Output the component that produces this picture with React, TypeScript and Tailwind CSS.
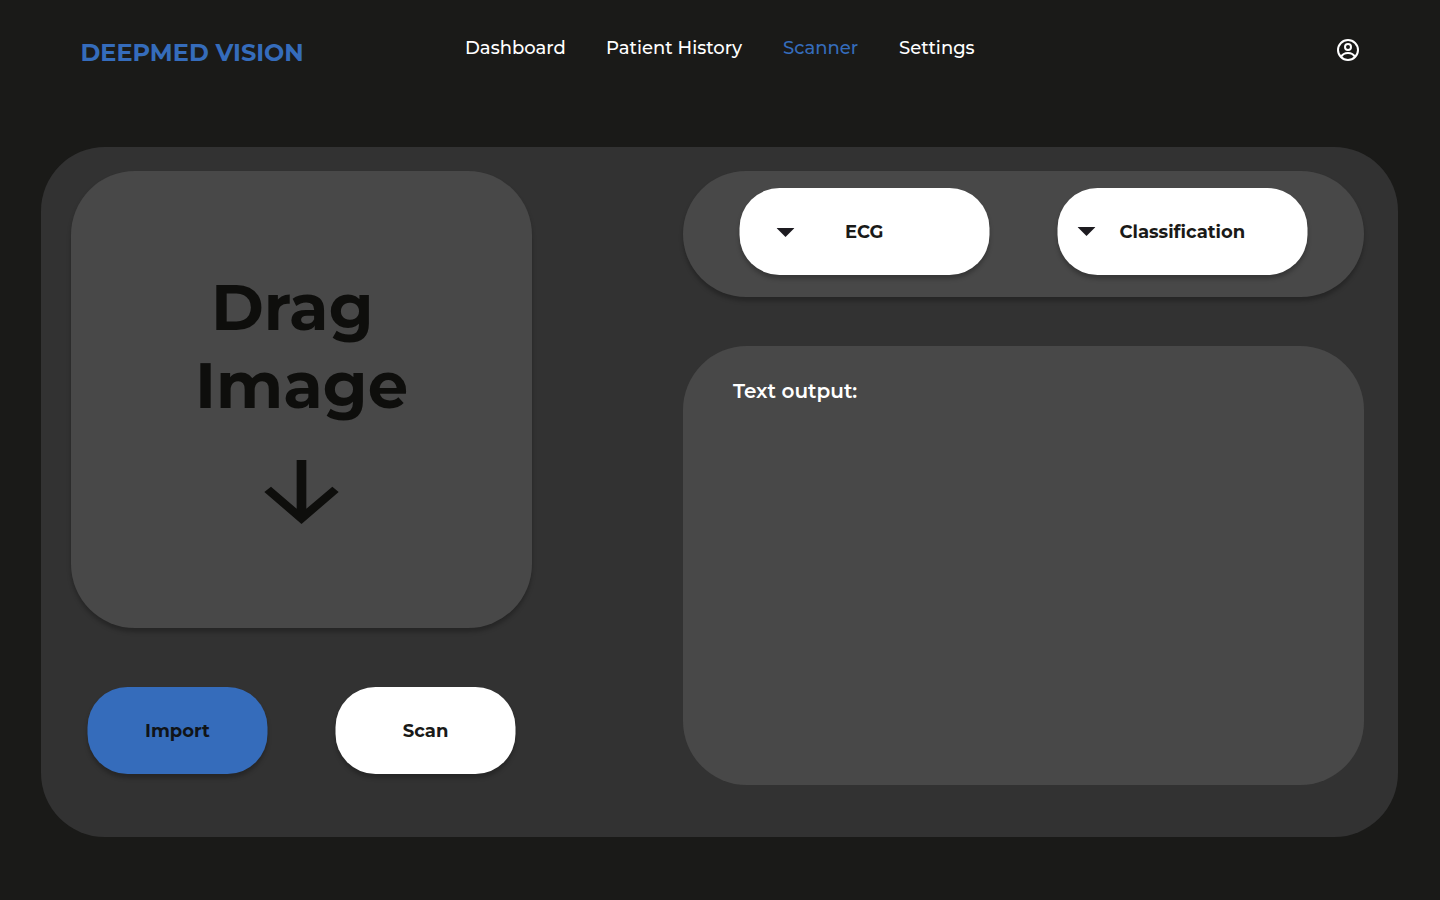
function AccountIcon() {
  return (
    <svg viewBox="0 0 22 22" className="size-[22px]" fill="none" stroke="#fff" strokeWidth="2">
      <circle cx="11" cy="11" r="10" />
      <circle cx="11" cy="8" r="3" />
      <path d="M4 18C5.4 15.3 8 14 11 14C14 14 16.6 15.3 18 18" />
    </svg>
  );
}

function Caret() {
  return (
    <svg viewBox="0 0 18 9" className="h-[9px] w-[18px] shrink-0">
      <path d="M0 0H18L9 9Z" fill="#1d1b20" />
    </svg>
  );
}

export default function App() {
  return (
    <div className="flex h-[900px] w-[1440px] flex-col overflow-hidden bg-[#1a1a18] font-['Montserrat','Inter',sans-serif] whitespace-nowrap text-white">
      <header className="flex h-[147px] shrink-0 items-start">
        <h1 className="mt-[37px] ml-[80px] w-[385px] pl-[0.5px] text-2xl leading-[32px] font-bold text-[#356cbb]">
          DEEPMED VISION
        </h1>
        <nav className="mt-[36px] flex text-lg leading-6 font-medium">
          <a className="w-[141px]">Dashboard</a>
          <a className="w-[177px]">Patient History</a>
          <a className="w-[116px] text-[#356cbb]">Scanner</a>
          <a className="w-[100px]">Settings</a>
        </nav>
        <button className="mt-[39px] ml-[338px]"><AccountIcon /></button>
      </header>

      <main className="ml-[41px] flex h-[690px] w-[1357px] shrink-0 rounded-[64px] bg-[#323232] pt-6 pl-[30px]">
        <section className="w-[612px] shrink-0">
          <div className="flex h-[457px] w-[461px] flex-col rounded-[64px] bg-[#484848] pt-[97px] text-[#0e0e0c] shadow-[0_4px_4px_rgba(0,0,0,0.25)]">
            <div className="flex flex-col text-[64px] leading-[78px] font-bold">
              <div className="pl-[140px]">Drag</div>
              <div className="pl-[124px]">Image</div>
            </div>
            <svg viewBox="252 570 225 192" className="mt-[36px] ml-[193px] h-[64px] w-[75px]" fill="#0e0e0c">
              <path d="M350 570H379V716L457 650L476 666L364.5 762L253 666L273 650L350 716Z" />
            </svg>
          </div>
          <div className="mt-[59px] ml-[17px] flex -translate-x-[0.5px] gap-[68px] text-lg leading-[88px] font-bold text-[#1a1a18]">
            <button className="h-[87px] w-[180px] rounded-[40px] bg-[#356cbb] text-[#101418] shadow-[0_4px_4px_rgba(0,0,0,0.25)]">
              Import
            </button>
            <button className="h-[87px] w-[180px] rounded-[40px] bg-white shadow-[0_4px_4px_rgba(0,0,0,0.25)]">
              Scan
            </button>
          </div>
        </section>

        <section className="w-[681px] shrink-0">
          <div className="h-[126px] rounded-[64px] bg-[#484848] pt-[17px] pl-[57px] shadow-[0_4px_4px_rgba(0,0,0,0.25)]">
            <div className="flex -translate-x-[0.5px] gap-[68px] text-lg leading-7 font-bold text-[#1a1a18]">
              <button className="flex h-[87px] w-[250px] items-start rounded-[40px] bg-white pt-[30px] pl-[37px] shadow-[0_4px_4px_rgba(0,0,0,0.25)]">
                <span className="flex w-[68.5px] pt-[10px]"><Caret /></span>
                ECG
              </button>
              <button className="flex h-[87px] w-[250px] items-start rounded-[40px] bg-white pt-[30px] pl-[20px] shadow-[0_4px_4px_rgba(0,0,0,0.25)]">
                <span className="flex w-[42px] pt-[9px]"><Caret /></span>
                Classification
              </button>
            </div>
          </div>
          <div className="mt-[49px] h-[439px] rounded-[64px] bg-[#484848] pt-[31px] pl-[50px] text-xl leading-7 font-semibold">
            Text output:
          </div>
        </section>
      </main>
    </div>
  );
}
